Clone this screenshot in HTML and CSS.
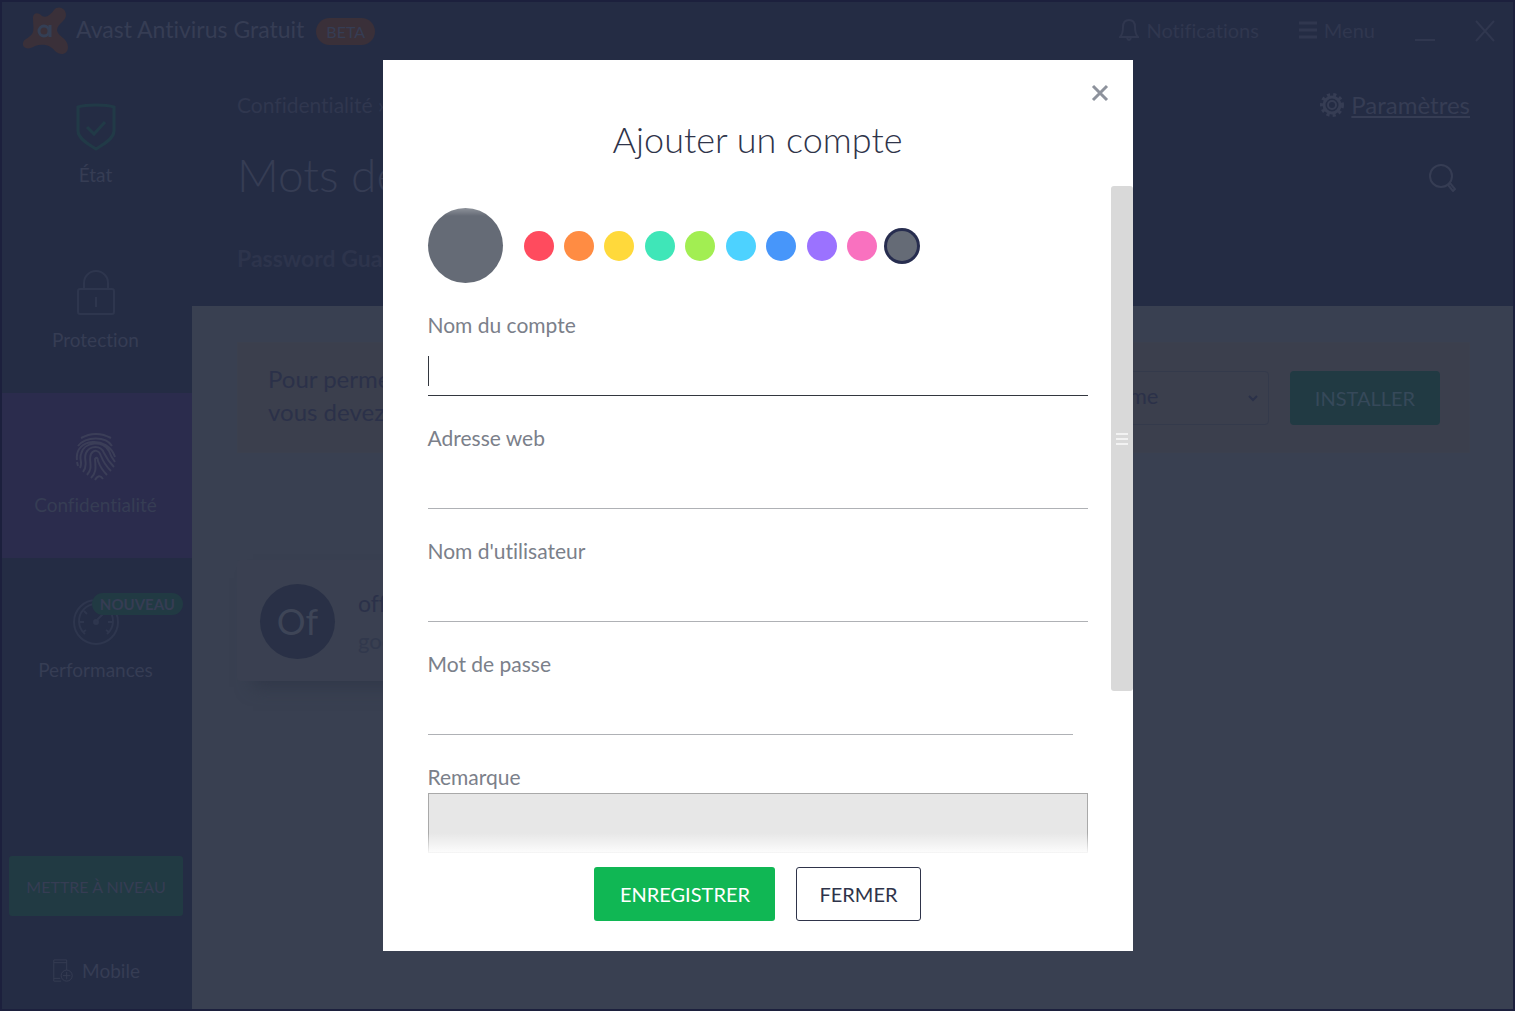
FILE: index.html
```html
<!DOCTYPE html>
<html lang="fr">
<head>
<meta charset="UTF-8">
<meta name="viewport" content="width=device-width, initial-scale=1.0">
<title>Avast Antivirus Gratuit</title>
<link rel="stylesheet" href="styles.css">
</head>
<body>
    <div class="app">
        <header class="titlebar">
            <svg class="logo" viewBox="0 0 48 48">
                <path class="logo-shape" d="M11 12C10 6 16 4 20 9c5 2 8-1 12-6 4-5 12-2 12 5 0 6-8 8-9 15 0 6 11 8 11 17 0 8-8 9-13 4-6-7-13-7-20-5-6 4-13 3-12-3 1-5 8-5 10-11 1-5 0-8 0-13z"/>
                <circle class="logo-letter" cx="22" cy="24" r="5"/>
                <path class="logo-letter" d="M28 18v12"/>
            </svg>
            <span class="app-name">Avast Antivirus Gratuit</span>
            <span class="beta">BETA</span>
            <div class="window-tools">
                <button class="tool notifications">
                    <svg width="20" height="24" viewBox="0 0 20 24"><path d="M1 19c3-3 3-6 3-10 0-4 2-7 6-7s6 3 6 7c0 4 0 7 3 10zM8 20q2 4 4 0"/></svg>
                    Notifications
                </button>
                <button class="tool menu">
                    <svg width="18" height="20" viewBox="0 0 18 20"><path class="thick" d="M0 3h18M0 10h18M0 17h18"/></svg>
                    Menu
                </button>
                <button class="tool minimize" aria-label="Réduire">
                    <svg width="20" height="20" viewBox="0 0 20 20"><path d="M0 19h20"/></svg>
                </button>
                <button class="tool" aria-label="Quitter">
                    <svg width="20" height="22" viewBox="0 0 20 22"><path d="M1 1l18 20M19 1L1 21"/></svg>
                </button>
            </div>
        </header>
        <nav class="sidebar">
            <a href="#" class="nav-item status">
                <svg viewBox="0 0 48 48"><path d="M24 2c5 0 12 0 18 2v24c0 8-12 14-18 18C18 42 6 36 6 28V4c6-2 13-2 18-2zM15 24l7 7 11-12"/></svg>
                <span>État</span>
            </a>
            <a href="#" class="nav-item">
                <svg viewBox="0 0 48 48"><rect x="6" y="21" width="36" height="25" rx="2"/><path d="M12 21v-6a12 12 0 0 1 24 0v6M24 29v10"/></svg>
                <span>Protection</span>
            </a>
            <a href="#" class="nav-item active">
                <svg class="fingerprint" viewBox="0 0 48 48">
                    <path d="M9 5q15-8 30 0M6 13C14 3 34 3 40 13M5 27C2 5 36 2 43 24M6 33l-1-4M8 35C11 29 7 27 9 21 12 8 32 7 37 18q2 6 6 11M11 39C17 31 11 27 14 20 18 12 29 12 32 20q4 8 10 14M15 42C22 34 16 28 19 21c3-5 8-4 10 2q3 8 10 15M19 45c5-5 5-9 4-19 2-3 3 0 3 2q3 8 9 14M23 47q4-7 8-1"/>
                </svg>
                <span>Confidentialité</span>
            </a>
            <a href="#" class="nav-item">
                <svg viewBox="0 0 48 48"><circle cx="24" cy="24" r="22"/><path d="M13 36a17 17 0 1 1 22 0M8 24h4M36 24h4M12 13l3 3M24 7v4M11 34l3-2M37 34l-3-2M25 22l12-12"/><circle class="pivot" cx="24" cy="24" r="2"/></svg>
                <span>Performances</span>
                <span class="new-badge">NOUVEAU</span>
            </a>
            <button class="upgrade">METTRE À NIVEAU</button>
            <a href="#" class="mobile">
                <svg width="24" height="26" viewBox="0 0 24 26"><path d="M10 24H2V1h14v11M2 4h14M2 21h7"/><circle cx="16" cy="18" r="6"/><path d="M16 14v8M12 18h8"/></svg>
                Mobile
            </a>
        </nav>
        <main class="main">
            <div class="page-head">
                <div class="head-row">
                    <span class="breadcrumb">Confidentialité ›</span>
                    <a href="#" class="settings">
                        <svg width="24" height="24" viewBox="0 0 24 24"><circle class="teeth" cx="12" cy="12" r="10"/><circle class="wheel" cx="12" cy="12" r="8"/><circle cx="12" cy="12" r="4"/></svg>
                        <span>Paramètres</span>
                    </a>
                </div>
                <div class="head-row title-row">
                    <h1>Mots de passe</h1>
                    <button class="tool search" aria-label="Rechercher">
                        <svg width="28" height="28" viewBox="0 0 28 28"><circle cx="13" cy="12" r="11"/><path d="M20 21l2-2 5 6-2 2z"/></svg>
                    </button>
                </div>
                <div class="tab">Password Guardian</div>
            </div>
            <div class="content">
                <div class="notice">
                    <p>Pour permettre la connexion,<br>vous devez installer l'extension</p>
                    <div class="select-box">
                        <select aria-label="Navigateur">
                            <option>Google Chrome</option>
                        </select>
                        <svg width="10" height="8" viewBox="0 0 10 8"><path d="M1 2l4 4 4-4"/></svg>
                    </div>
                    <button class="install">INSTALLER</button>
                </div>
                <div class="account">
                    <span class="initials">Of</span>
                    <div>
                        <div class="account-name">office</div>
                        <div class="account-site">google.com</div>
                    </div>
                </div>
            </div>
        </main>
    </div>

    <div class="overlay">
        <form class="modal" role="dialog" aria-labelledby="modalTitle">
            <div class="modal-head">
                <button type="button" class="close" aria-label="Fermer la fenêtre">
                    <svg width="18" height="18" viewBox="0 0 18 18"><path d="M2 2l14 14M16 2L2 16"/></svg>
                </button>
                <h2 id="modalTitle">Ajouter un compte</h2>
            </div>
            <div class="modal-body">
                <div class="colors">
                    <span class="preview"></span>
                    <div class="swatches">
                        <input type="radio" name="color" class="red" aria-label="Rouge">
                        <input type="radio" name="color" class="orange" aria-label="Orange">
                        <input type="radio" name="color" class="yellow" aria-label="Jaune">
                        <input type="radio" name="color" class="teal" aria-label="Turquoise">
                        <input type="radio" name="color" class="green" aria-label="Vert">
                        <input type="radio" name="color" class="sky" aria-label="Bleu ciel">
                        <input type="radio" name="color" class="blue" aria-label="Bleu">
                        <input type="radio" name="color" class="purple" aria-label="Violet">
                        <input type="radio" name="color" class="pink" aria-label="Rose">
                        <input type="radio" name="color" class="gray" aria-label="Gris" checked>
                    </div>
                </div>
                <div class="field">
                    <label for="accountName">Nom du compte</label>
                    <input type="text" id="accountName" class="current">
                </div>
                <div class="field">
                    <label for="webAddress">Adresse web</label>
                    <input type="text" id="webAddress">
                </div>
                <div class="field">
                    <label for="userName">Nom d'utilisateur</label>
                    <input type="text" id="userName">
                </div>
                <div class="field password">
                    <label for="password">Mot de passe</label>
                    <input type="password" id="password">
                </div>
                <div class="field">
                    <label for="note">Remarque</label>
                    <textarea id="note"></textarea>
                </div>
                <div class="scrollbar">
                    <svg width="12" height="12" viewBox="0 0 12 12"><path d="M0 1h12M0 6h12M0 11h12"/></svg>
                </div>
            </div>
            <div class="modal-foot">
                <button type="submit" class="save">ENREGISTRER</button>
                <button type="button" class="cancel">FERMER</button>
            </div>
        </form>
    </div>
</body>
</html>
```
FILE: styles.css
```css
* {
    box-sizing: border-box;
}
body {
    margin: 0;
    font-family: Lato, sans-serif;
    font-size: 20px;
    font-variant-ligatures: none;
    color: #363d54;
    background-color: #242c44;
}
h1, h2, p {
    margin: 0;
    font-weight: 300;
}
a {
    color: inherit;
    text-decoration: none;
}
button, input, select, textarea {
    font: inherit;
    color: inherit;
    margin: 0;
    padding: 0;
    border: none;
    border-radius: 0;
    background: none;
    outline: none;
}
button {
    cursor: pointer;
}
svg {
    display: block;
    flex: none;
    fill: none;
    stroke: currentColor;
    stroke-width: 2;
}
.app {
    display: grid;
    grid-template-columns: 190px 1fr;
    grid-template-rows: 61px 1fr;
    min-height: 100vh;
    border: 2px solid #1c203d;
}

/* title bar */
.titlebar {
    grid-column: 1 / 3;
    display: flex;
    align-items: center;
    padding: 0 18px 3px 20px;
}
.logo {
    width: 48px;
    height: 48px;
}
.logo-shape {
    fill: #3a3039;
    stroke: none;
}
.logo-letter {
    stroke: #343f55;
    stroke-width: 3;
}
.app-name {
    margin-left: 6px;
    padding-bottom: 4px;
    font-size: 23px;
    line-height: 28px;
}
.beta {
    margin-left: 12px;
    padding: 0 10px;
    border-radius: 14px;
    font-size: 16px;
    line-height: 27px;
    background-color: #3a3039;
}
.window-tools {
    display: flex;
    align-items: center;
    gap: 40px;
    margin-left: auto;
    line-height: 24px;
    color: #30374f;
}
.tool {
    display: flex;
    align-items: center;
    gap: 7px;
}
.notifications, .menu {
    padding-bottom: 3px;
}
.thick {
    stroke-width: 3;
}

/* sidebar */
.sidebar {
    display: flex;
    flex-direction: column;
    font-size: 19px;
}
.nav-item {
    position: relative;
    display: flex;
    flex-direction: column;
    align-items: center;
    gap: 12px;
    height: 165px;
    padding: 40px 3px 0 0;
    line-height: 24px;
}
.nav-item svg {
    width: 48px;
    height: 48px;
    color: #2e364e;
}
.status svg {
    color: #213a47;
    stroke-width: 3;
}
.active {
    background-color: #2b2c4d;
}
.nav-item .fingerprint {
    color: #3b3e58;
}
.pivot {
    fill: currentColor;
}
.new-badge {
    position: absolute;
    top: 35px;
    right: 9px;
    padding: 0 8px;
    border-radius: 11px;
    font-size: 15px;
    font-weight: 700;
    line-height: 22px;
    background-color: #213a43;
}
.upgrade {
    height: 60px;
    margin: auto 9px 0 7px;
    border-radius: 3px;
    font-size: 16px;
    background-color: #213a43;
}
.mobile {
    display: flex;
    align-items: center;
    justify-content: center;
    gap: 7px;
    padding: 43px 3px 26px 0;
    line-height: 24px;
}
.mobile svg {
    height: 24px;
    stroke-width: 1;
}

/* page */
.main {
    display: flex;
    flex-direction: column;
    background-color: #394051;
}
.page-head {
    height: 243px;
    padding: 28px 43px 0 45px;
    background-color: #242c44;
}
.head-row {
    display: flex;
    align-items: center;
    justify-content: space-between;
    line-height: 28px;
}
.breadcrumb {
    font-size: 21px;
    color: #30374f;
}
.settings {
    display: flex;
    align-items: center;
    gap: 7px;
    font-size: 24px;
}
.settings span {
    text-decoration: underline;
}
.teeth {
    stroke-width: 4;
    stroke-dasharray: 3 3;
}
.wheel {
    stroke-width: 3;
}
.title-row {
    padding: 28px 14px 0 0;
}
.title-row h1 {
    font-size: 46px;
    line-height: 56px;
}
.search {
    padding-top: 6px;
    stroke-width: 2;
}
.tab {
    margin-top: 41px;
    font-size: 23px;
    font-weight: 700;
    line-height: 28px;
    color: #2d344c;
}
.content {
    padding: 36px 43px 36px 45px;
    color: #2b3149;
}
.notice {
    display: flex;
    align-items: center;
    gap: 21px;
    height: 111px;
    padding: 0 29px 0 30px;
    border: 1px solid #3b404e;
    background-color: #3b3f4d;
}
.notice p {
    flex: 1;
    font-size: 24px;
    font-weight: 400;
    line-height: 33px;
    padding-bottom: 6px;
}
.select-box {
    display: flex;
    align-items: center;
    width: 276px;
    padding-right: 10px;
    border: 1px solid #343a4b;
    border-radius: 4px;
}
.select-box select {
    flex: 1;
    height: 52px;
    padding: 0 0 4px 13px;
    font-size: 22px;
    appearance: none;
}
.install {
    width: 150px;
    height: 54px;
    border-radius: 4px;
    color: #36495a;
    background-color: #213a43;
}
.account {
    display: flex;
    align-items: center;
    gap: 23px;
    width: 50%;
    height: 121px;
    margin-top: 107px;
    padding: 2px 23px 0;
    border-radius: 3px;
    background-color: #3a4051;
    box-shadow: 10px 12px 16px -6px #313849;
}
.initials {
    width: 75px;
    border-radius: 50%;
    text-align: center;
    font-size: 36px;
    line-height: 75px;
    color: #3e4557;
    background-color: #293046;
}
.account-name {
    font-size: 23px;
    line-height: 38px;
}
.account-site {
    font-size: 22px;
    line-height: 38px;
    color: #31384c;
}

/* add account dialog */
.overlay {
    position: fixed;
    inset: 0;
    display: flex;
    align-items: center;
    justify-content: center;
}
.modal {
    width: 750px;
    background-color: #fff;
    color: #2f344a;
}
.modal-head {
    display: flex;
    flex-direction: column;
    height: 126px;
    padding: 24px 24px 0;
}
.close {
    align-self: flex-end;
    color: #8d929c;
}
.close svg {
    stroke-width: 3;
}
.modal-head h2 {
    margin-top: 15px;
    text-align: center;
    font-size: 36px;
    line-height: 44px;
}
.modal-body {
    position: relative;
    display: flex;
    flex-direction: column;
    gap: 28px;
    padding: 22px 45px 0;
}
.modal-body::before,
.modal-body::after {
    content: "";
    position: absolute;
    left: 0;
    right: 22px;
}
.modal-body::before {
    top: 0;
    height: 30px;
    background: linear-gradient(#fff, rgba(255, 255, 255, 0));
}
.modal-body::after {
    bottom: 0;
    height: 20px;
    background: linear-gradient(rgba(255, 255, 255, 0), rgba(255, 255, 255, 0.9));
}
.colors {
    display: flex;
    align-items: center;
    gap: 21px;
}
.preview {
    width: 75px;
    height: 75px;
    border-radius: 50%;
    background-color: #656b76;
}
.swatches {
    display: flex;
    justify-content: space-between;
    width: 394px;
}
.swatches input {
    appearance: none;
    width: 30px;
    height: 30px;
    border-radius: 50%;
}
.swatches input:checked {
    box-shadow: 0 0 0 3px #272d4f;
}
.red { background-color: #ff4b5e; }
.orange { background-color: #ff8c43; }
.yellow { background-color: #ffd93b; }
.teal { background-color: #3fe6b8; }
.green { background-color: #a2ee52; }
.sky { background-color: #4dd2ff; }
.blue { background-color: #4796fa; }
.purple { background-color: #9b72ff; }
.pink { background-color: #f971bf; }
.gray { background-color: #656b76; }
.field {
    display: flex;
    flex-direction: column;
}
.field label {
    padding-bottom: 2px;
    font-size: 21px;
    line-height: 28px;
    color: #7b808a;
}
.field input {
    height: 55px;
    border-bottom: 1px solid #afb1b5;
}
.field .current {
    border-bottom-color: #33373f;
    background: linear-gradient(#33373f, #33373f) 0 15px / 1px 30px no-repeat;
}
.password {
    padding-right: 15px;
}
.field textarea {
    height: 60px;
    border: 1px solid #a9a9a9;
    background-color: #e7e7e7;
    resize: none;
}
.scrollbar {
    position: absolute;
    top: 0;
    right: 0;
    display: flex;
    align-items: center;
    justify-content: center;
    width: 22px;
    height: 505px;
    border-radius: 3px;
    color: #f2f2f2;
    background-color: #d9d9d9;
}
.modal-foot {
    display: flex;
    justify-content: center;
    gap: 21px;
    padding: 14px 0 30px;
}
.save, .cancel {
    height: 54px;
    padding: 0 22px;
    border-radius: 3px;
}
.save {
    min-width: 181px;
    color: #fff;
    background-color: #10b754;
}
.cancel {
    border: 1px solid #2f344a;
}
```
